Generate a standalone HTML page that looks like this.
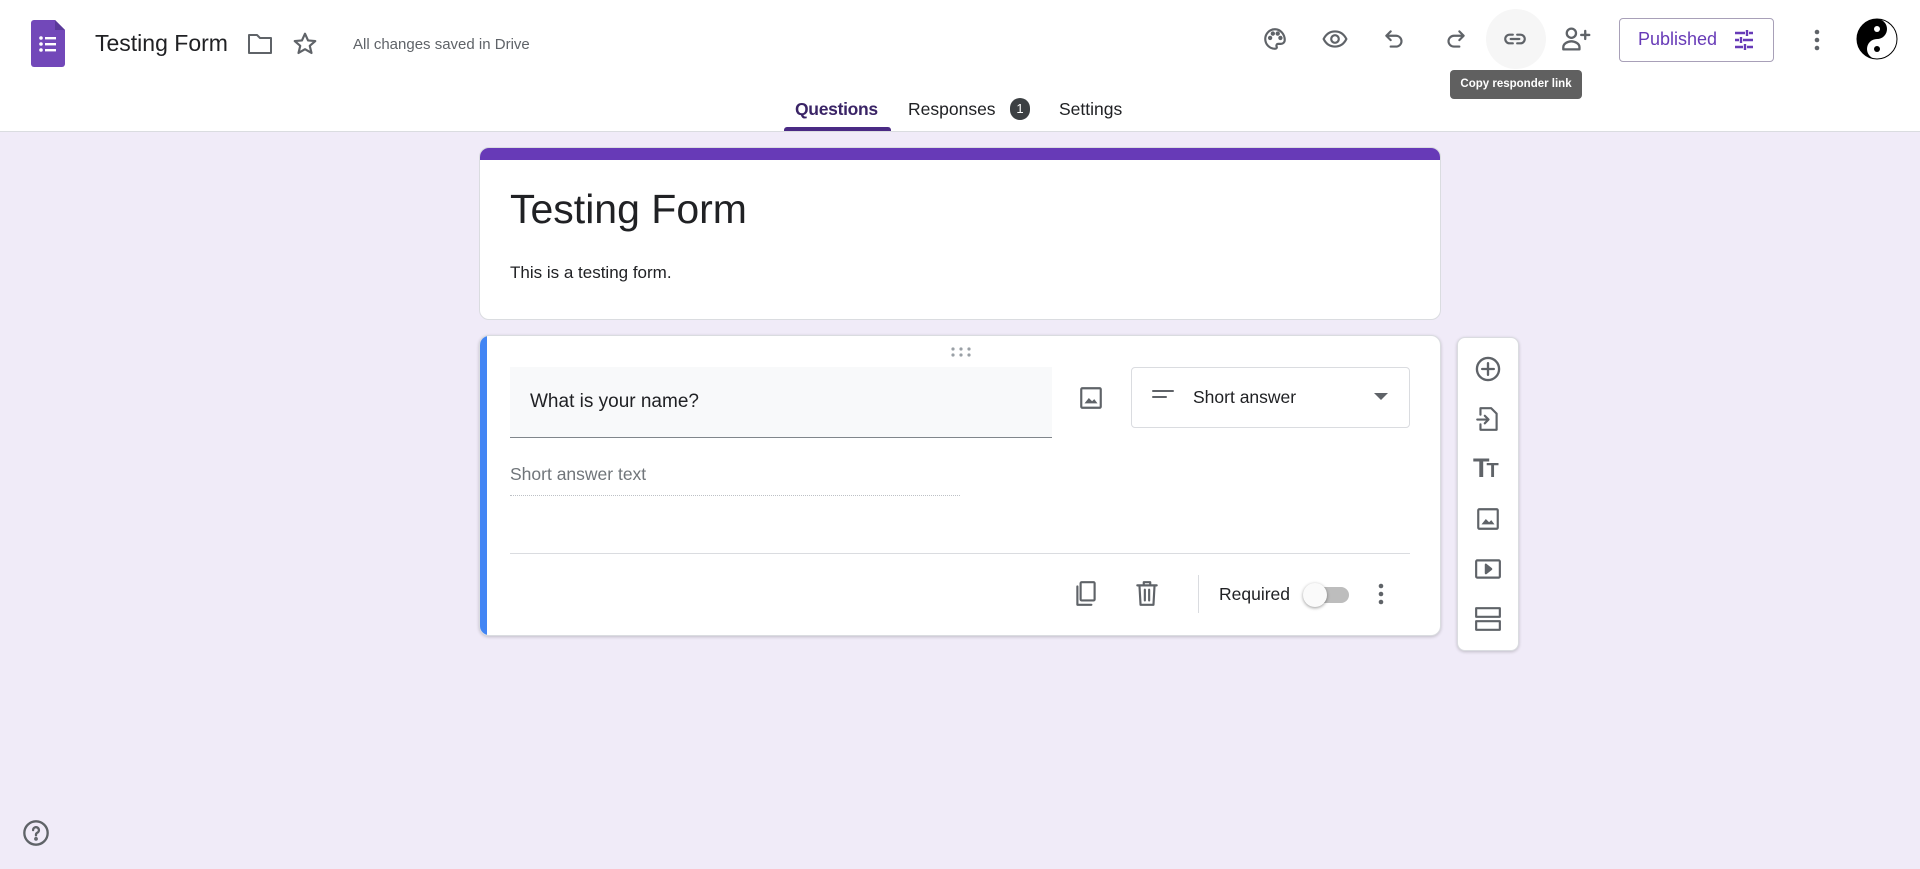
<!DOCTYPE html>
<html><head><meta charset="utf-8"><style>
*{box-sizing:border-box;margin:0;padding:0}
body{width:1920px;height:869px;background:#f0ebf8;font-family:"Liberation Sans",Arial,sans-serif;position:relative;overflow:hidden;color:#202124}
.hdr{position:absolute;left:0;top:0;width:1920px;height:132px;background:#fff;border-bottom:1px solid #dadce0}
.a{position:absolute}
svg.i{position:absolute;fill:none;stroke:#5f6368;stroke-width:2;stroke-linecap:round;stroke-linejoin:round}
.card{position:absolute;background:#fff;border-radius:10px;border:1px solid #dadce0}
</style></head><body>
<div class="hdr">
 <svg class="a" style="left:31px;top:20px" width="34" height="47" viewBox="0 0 34 47"><path d="M3 0h21l10 10v34a3 3 0 0 1-3 3H3a3 3 0 0 1-3-3V3a3 3 0 0 1 3-3z" fill="#7248b9"/><path d="M24 0l10 10H24z" fill="#5b3a9a"/><g fill="#fff"><circle cx="10" cy="18" r="1.8"/><circle cx="10" cy="24" r="1.8"/><circle cx="10" cy="30" r="1.8"/><rect x="14" y="17" width="11" height="2.4"/><rect x="14" y="23" width="11" height="2.4"/><rect x="14" y="29" width="11" height="2.4"/></g></svg>
 <div class="a" style="left:95px;top:30px;font-size:23px;color:#202124">Testing Form</div>
 <svg class="i" style="left:247px;top:32px" width="26" height="24" viewBox="0 0 26 24"><path d="M2 3h8l3 3h11v15H2z"/></svg>
 <svg class="i" style="left:292px;top:31px" width="26" height="26" viewBox="0 0 24 24" stroke-width="1.7"><path d="M12 2.5l2.8 6.2 6.7.6-5.1 4.4 1.6 6.6L12 16.8l-6 3.5 1.6-6.6-5.1-4.4 6.7-.6z"/></svg>
 <div class="a" style="left:353px;top:36px;font-size:15px;color:#5f6368">All changes saved in Drive</div>

 <svg class="i" style="left:1262px;top:26px" width="26" height="26" viewBox="0 0 24 24"><path d="M12 3a9 9 0 0 0 0 18c1.5 0 2-1 1.5-2s0-2.5 1.5-2.5h2.5A3.5 3.5 0 0 0 21 13c0-5.5-4-10-9-10z"/><circle cx="7.5" cy="11" r="1" fill="#5f6368"/><circle cx="10" cy="7" r="1" fill="#5f6368"/><circle cx="14.5" cy="7" r="1" fill="#5f6368"/><circle cx="17" cy="11" r="1" fill="#5f6368"/></svg>
 <svg class="i" style="left:1321px;top:26px" width="28" height="26" viewBox="0 0 24 24"><path d="M1.5 12C4 7 8 5 12 5s8 2 10.5 7c-2.5 5-6.5 7-10.5 7S4 17 1.5 12z"/><circle cx="12" cy="12" r="3.5"/></svg>
 <svg class="i" style="left:1382px;top:26px" width="26" height="26" viewBox="0 0 24 24"><path d="M8 5L4 9l4 4M4 9h9a5 5 0 0 1 0 10H8"/></svg>
 <svg class="i" style="left:1442px;top:26px" width="26" height="26" viewBox="0 0 24 24"><path d="M16 5l4 4-4 4M20 9h-9a5 5 0 0 0 0 10h5"/></svg>
 <div class="a" style="left:1486px;top:9px;width:60px;height:60px;border-radius:50%;background:#f6f6f6"></div>
 <svg class="i" style="left:1502px;top:26px" width="26" height="26" viewBox="0 0 24 24"><path d="M10 8H7a4 4 0 0 0 0 8h3M14 8h3a4 4 0 0 1 0 8h-3M8 12h8"/></svg>
 <svg class="i" style="left:1561px;top:25px" width="30" height="28" viewBox="0 0 26 24"><circle cx="9" cy="7" r="4"/><path d="M2 21v-2c0-3 4-5 7-5s7 2 7 5v2zM21 5v7M17.5 8.5h7"/></svg>
 <div class="a" style="left:1619px;top:18px;width:155px;height:44px;border:1px solid #a8a0b8;border-radius:4px"></div>
 <div class="a" style="left:1638px;top:29px;font-size:18px;color:#673ab7">Published</div>
 <svg class="a" style="left:1732px;top:28px" width="24" height="24" viewBox="0 0 24 24" fill="none" stroke="#673ab7" stroke-width="2.4"><path d="M3 5h10M17 5h4M15 2v6M3 12h4M11 12h10M9 9v6M3 19h8M15 19h6M13 16v6"/></svg>
 <svg class="a" style="left:1811px;top:27px" width="12" height="26" viewBox="0 0 12 26" fill="#5f6368"><circle cx="6" cy="5" r="2.3"/><circle cx="6" cy="13" r="2.3"/><circle cx="6" cy="21" r="2.3"/></svg>
 <svg class="a" style="left:1856px;top:18px" width="42" height="42" viewBox="0 0 42 42"><circle cx="21" cy="21" r="20" fill="#fff" stroke="#000" stroke-width="1"/><path d="M21 1a20 20 0 0 0 0 40a10 10 0 0 1 0-20a10 10 0 0 0 0-20z" fill="#000"/><circle cx="21" cy="11" r="3" fill="#fff"/><circle cx="21" cy="31" r="3" fill="#000"/></svg>
 <div class="a" style="left:1450px;top:70px;width:132px;height:29px;background:#606060;border-radius:4px;color:#fff;font-size:11.5px;font-weight:bold;text-align:center;line-height:29px">Copy responder link</div>

 <div class="a" style="left:795px;top:99px;font-size:17.5px;color:#3a2466;font-weight:bold;letter-spacing:-0.3px">Questions</div>
 <div class="a" style="left:784px;top:127px;width:107px;height:4px;background:#4a2a84;border-radius:3px 3px 0 0"></div>
 <div class="a" style="left:908px;top:99px;font-size:17.5px;color:#202124">Responses</div>
 <div class="a" style="left:1010px;top:98px;width:20px;height:22px;border-radius:10px;background:#3c4043;color:#fff;font-size:13px;text-align:center;line-height:22px">1</div>
 <div class="a" style="left:1059px;top:99px;font-size:17.5px;color:#202124">Settings</div>
</div>

<div class="card" style="left:479px;top:147px;width:962px;height:173px;overflow:hidden">
 <div class="a" style="left:0;top:0;width:100%;height:12px;background:#673ab7"></div>
 <div class="a" style="left:30px;top:38px;font-size:41px;color:#202124">Testing Form</div>
 <div class="a" style="left:30px;top:115px;font-size:17px;color:#202124">This is a testing form.</div>
</div>

<div class="card" style="left:479px;top:335px;width:962px;height:301px;overflow:hidden;box-shadow:0 1px 3px rgba(0,0,0,.2)">
 <div class="a" style="left:0;top:0;width:7px;height:100%;background:#4285f4"></div>
 <svg class="a" style="left:470px;top:10px" width="22" height="12" viewBox="0 0 22 12" fill="#9aa0a6"><circle cx="3" cy="3" r="1.6"/><circle cx="11" cy="3" r="1.6"/><circle cx="19" cy="3" r="1.6"/><circle cx="3" cy="9" r="1.6"/><circle cx="11" cy="9" r="1.6"/><circle cx="19" cy="9" r="1.6"/></svg>
 <div class="a" style="left:30px;top:31px;width:542px;height:71px;background:#f8f9fa;border-bottom:1px solid #80868b"></div>
 <div class="a" style="left:50px;top:55px;font-size:19px;color:#202124">What is your name?</div>
 <svg class="i" style="left:598px;top:49px" width="26" height="26" viewBox="0 0 24 24"><rect x="3" y="3" width="18" height="18" rx="1"/><path d="M6 17l4-5 3 3 2-2 3 4z" fill="#5f6368" stroke="none"/></svg>
 <div class="a" style="left:651px;top:31px;width:279px;height:61px;border:1px solid #dadce0;border-radius:4px"></div>
 <svg class="i" style="left:671px;top:51px" width="24" height="16" viewBox="0 0 24 16"><path d="M2 4h20M2 10h13"/></svg>
 <div class="a" style="left:713px;top:51px;font-size:17.5px;color:#202124">Short answer</div>
 <svg class="a" style="left:894px;top:57px" width="14" height="8" viewBox="0 0 14 8"><path d="M0 0h14L7 7z" fill="#5f6368"/></svg>
 <div class="a" style="left:30px;top:128px;font-size:17.5px;color:#70757a">Short answer text</div>
 <div class="a" style="left:30px;top:159px;width:450px;border-bottom:1px dotted #bdc1c6"></div>
 <div class="a" style="left:30px;top:217px;width:900px;border-top:1px solid #dadce0"></div>
 <svg class="i" style="left:593px;top:244px" width="26" height="28" viewBox="0 0 24 26"><rect x="7" y="2" width="13" height="17" rx="1"/><path d="M4 6v17h13"/></svg>
 <svg class="i" style="left:654px;top:244px" width="26" height="28" viewBox="0 0 24 26"><path d="M3 5h18M9 5V2h6v3M5 5l1 18h12l1-18M10 9v10M14 9v10"/></svg>
 <div class="a" style="left:718px;top:239px;width:1px;height:38px;background:#dadce0"></div>
 <div class="a" style="left:739px;top:248px;font-size:17.5px;color:#202124">Required</div>
 <div class="a" style="left:831px;top:251px;width:38px;height:16px;border-radius:8px;background:#bdbdbd"></div>
 <div class="a" style="left:823px;top:247px;width:24px;height:24px;border-radius:50%;background:#fafafa;box-shadow:0 1px 3px rgba(0,0,0,.4)"></div>
 <svg class="a" style="left:895px;top:245px" width="12" height="26" viewBox="0 0 12 26" fill="#5f6368"><circle cx="6" cy="5" r="2.3"/><circle cx="6" cy="13" r="2.3"/><circle cx="6" cy="21" r="2.3"/></svg>
</div>

<div class="card" style="left:1457px;top:337px;width:62px;height:314px;border-radius:8px;box-shadow:0 1px 3px rgba(0,0,0,.2)">
 <svg class="i" style="left:16px;top:17px" width="28" height="28" viewBox="0 0 24 24"><circle cx="12" cy="12" r="9.5"/><path d="M12 7v10M7 12h10"/></svg>
 <svg class="i" style="left:17px;top:67px" width="26" height="28" viewBox="0 0 24 26"><path d="M5 9V3h10l5 5v15H5v-5M2 13.5h10M9 10l3.5 3.5L9 17"/></svg>
 <div class="a" style="left:15px;top:116px;font-size:27px;font-weight:bold;color:#5f6368;letter-spacing:-3px;line-height:28px">T<span style="font-size:20px">T</span></div>
 <svg class="i" style="left:17px;top:168px" width="26" height="26" viewBox="0 0 24 24"><rect x="3" y="3" width="18" height="18" rx="1"/><path d="M6 17l4-5 3 3 2-2 3 4z" fill="#5f6368" stroke="none"/></svg>
 <svg class="i" style="left:16px;top:218px" width="28" height="26" viewBox="0 0 26 24"><rect x="2" y="4" width="22" height="16" rx="1"/><path d="M11 8v8l5-4z" fill="#5f6368"/></svg>
 <svg class="i" style="left:16px;top:268px" width="28" height="26" viewBox="0 0 26 24"><rect x="2" y="2" width="22" height="8"/><rect x="2" y="14" width="22" height="8"/></svg>
</div>

<svg class="i" style="left:22px;top:819px" width="28" height="28" viewBox="0 0 24 24" stroke="#80868b" stroke-width="1.6"><circle cx="12" cy="12" r="10"/><path d="M9.5 9.5a2.5 2.5 0 1 1 3.5 2.3c-.7.4-1 1-1 1.7v.5"/><circle cx="12" cy="17" r=".6" fill="#80868b"/></svg>
</body></html>
